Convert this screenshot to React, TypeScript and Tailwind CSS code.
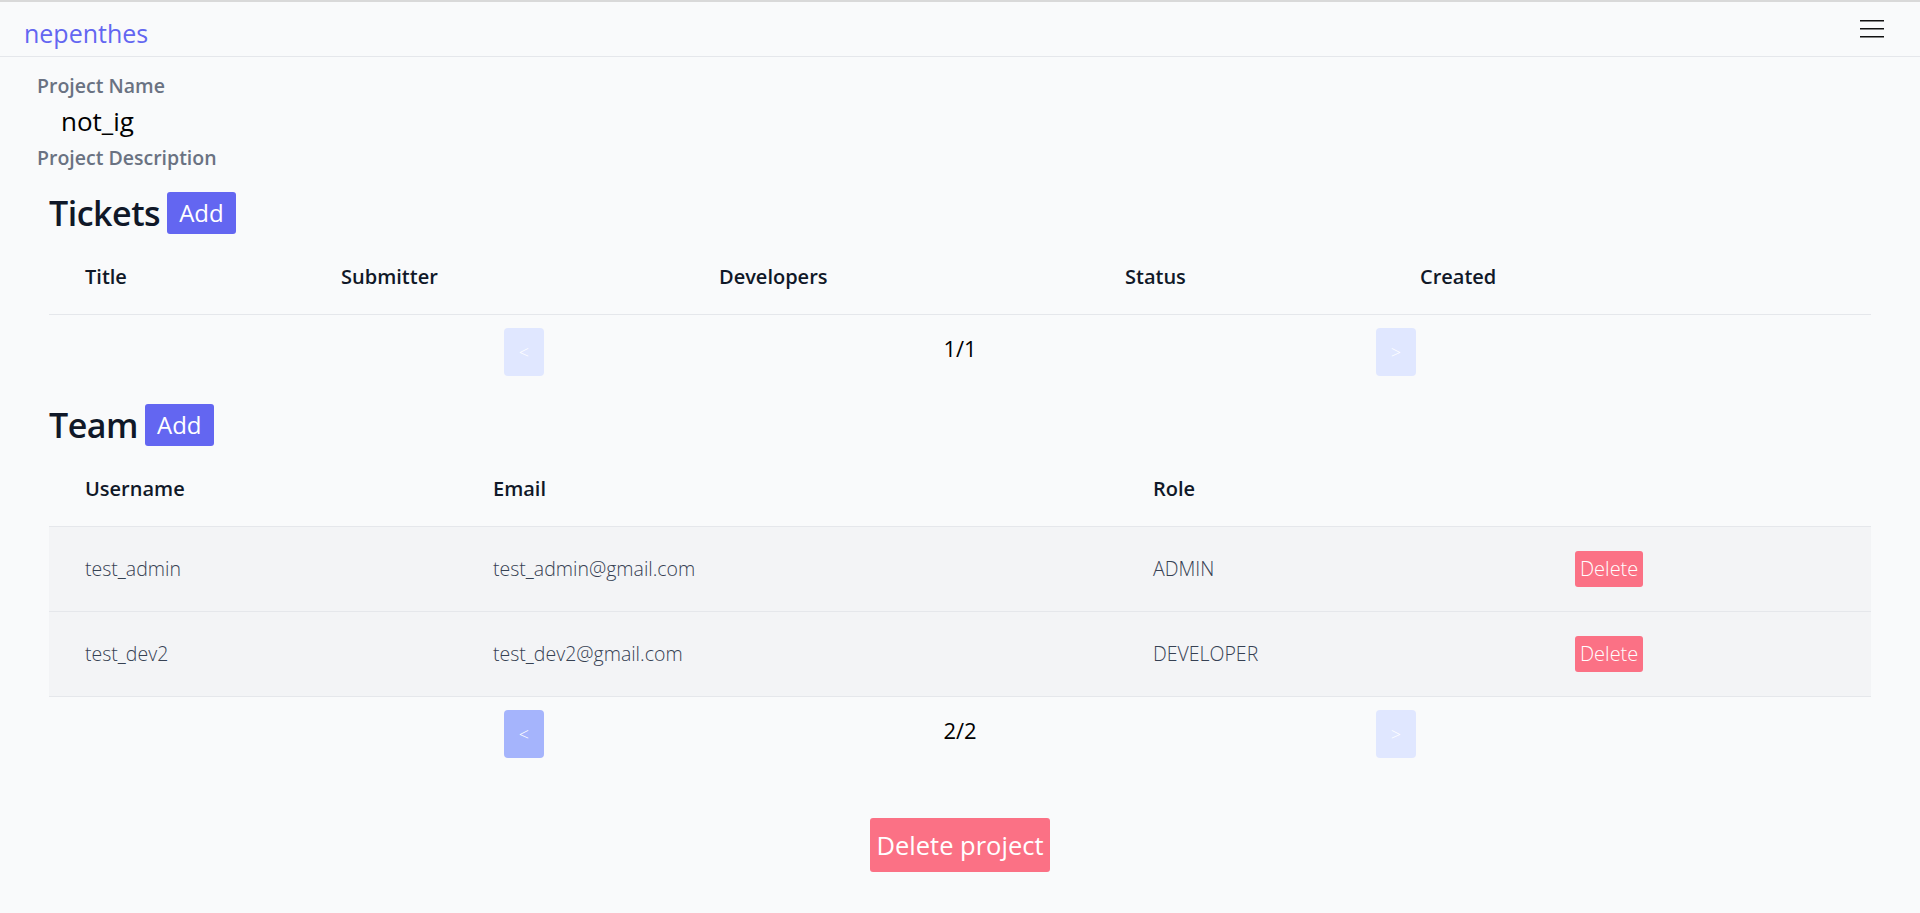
import React from "react";

const font = { fontFamily: '"Open Sans", "Noto Sans", sans-serif' };

function Pager({ label, prevActive }: { label: string; prevActive?: boolean }) {
  return (
    <div className="flex justify-center items-start mt-[13px]">
      <button
        className={`w-[40px] h-[48px] rounded-[4px] flex items-center justify-center text-white text-[18px] font-light ${
          prevActive ? "bg-[#a5b4fc]" : "bg-[#e0e7ff]"
        }`}
      >
        &lt;
      </button>
      <div className="w-[832px] text-center text-[22px] leading-[30px] pt-[5px] text-black">{label}</div>
      <button className="w-[40px] h-[48px] rounded-[4px] flex items-center justify-center text-white text-[18px] font-light bg-[#e0e7ff]">
        &gt;
      </button>
    </div>
  );
}

function SectionHead({ title }: { title: string }) {
  return (
    <div className="flex items-center gap-[7px] pl-[49px]">
      <h2 className="text-[34px] leading-[42px] font-semibold text-gray-900 tracking-[-0.5px]">{title}</h2>
      <button className="h-[42px] px-[12px] rounded-[3px] bg-[#6366f1] text-white text-[24px] leading-[42px]">Add</button>
    </div>
  );
}

const team = [
  { u: "test_admin", e: "test_admin@gmail.com", r: "ADMIN" },
  { u: "test_dev2", e: "test_dev2@gmail.com", r: "DEVELOPER" },
];

export default function App() {
  return (
    <div className="min-h-[913px] bg-[#f9fafb] border-t-2 border-[#d9d9d9]" style={font}>
      <nav className="h-[55px] flex items-center justify-between pl-[24px] pr-[36px] border-b border-[#e5e7eb]">
        <span className="text-[25px] leading-[34px] mt-[7px] text-[#6366f1]">nepenthes</span>
        <svg width="24" height="18" viewBox="0 0 24 18">
          <rect x="0" y="0" width="24" height="1.5" fill="#111" />
          <rect x="0" y="8" width="24" height="1.5" fill="#111" />
          <rect x="0" y="16" width="24" height="1.5" fill="#111" />
        </svg>
      </nav>

      <div className="pl-[37px] pt-[15px]">
        <div className="text-[19.5px] leading-[28px] font-semibold text-gray-500">Project Name</div>
        <div className="pl-[24px] text-[26px] leading-[36px] mt-[3px] text-black">not_ig</div>
        <div className="text-[19.5px] leading-[28px] font-semibold text-gray-500 mt-[5px]">Project Description</div>
      </div>

      <div className="mt-[20px]">
        <SectionHead title="Tickets" />
        <div className="mx-[49px] mt-[5px]">
          <div className="grid grid-cols-[256px_378px_406px_295px_1fr] h-[76px] items-center border-b border-[#e5e7eb] text-[20px] font-semibold text-gray-900">
            <div className="pl-[36px]">Title</div>
            <div className="pl-[36px]">Submitter</div>
            <div className="pl-[36px]">Developers</div>
            <div className="pl-[36px]">Status</div>
            <div className="pl-[36px]">Created</div>
          </div>
        </div>
        <Pager label="1/1" />
      </div>

      <div className="mt-[28px]">
        <SectionHead title="Team" />
        <div className="mx-[49px] mt-[5px]">
          <div className="grid grid-cols-[408px_660px_423px_1fr] h-[76px] items-center border-b border-[#e5e7eb] text-[20px] font-semibold text-gray-900">
            <div className="pl-[36px]">Username</div>
            <div className="pl-[36px]">Email</div>
            <div className="pl-[36px]">Role</div>
            <div />
          </div>
          {team.map((m) => (
            <div
              key={m.u}
              className="grid grid-cols-[408px_660px_423px_1fr] h-[85px] items-center border-b border-[#e5e7eb] bg-[#f3f4f6] text-[19.5px] font-light text-gray-700"
            >
              <div className="pl-[36px]">{m.u}</div>
              <div className="pl-[36px]">{m.e}</div>
              <div className="pl-[36px]">{m.r}</div>
              <div className="pl-[35px]">
                <button className="h-[36px] px-[5px] rounded-[3px] bg-[#fb7185] text-white text-[20px] font-light">Delete</button>
              </div>
            </div>
          ))}
        </div>
        <Pager label="2/2" prevActive />
      </div>

      <div className="flex justify-center mt-[60px]">
        <button className="h-[54px] px-[6px] rounded-[3px] bg-[#fb7185] text-white text-[25.5px]">Delete project</button>
      </div>
    </div>
  );
}
